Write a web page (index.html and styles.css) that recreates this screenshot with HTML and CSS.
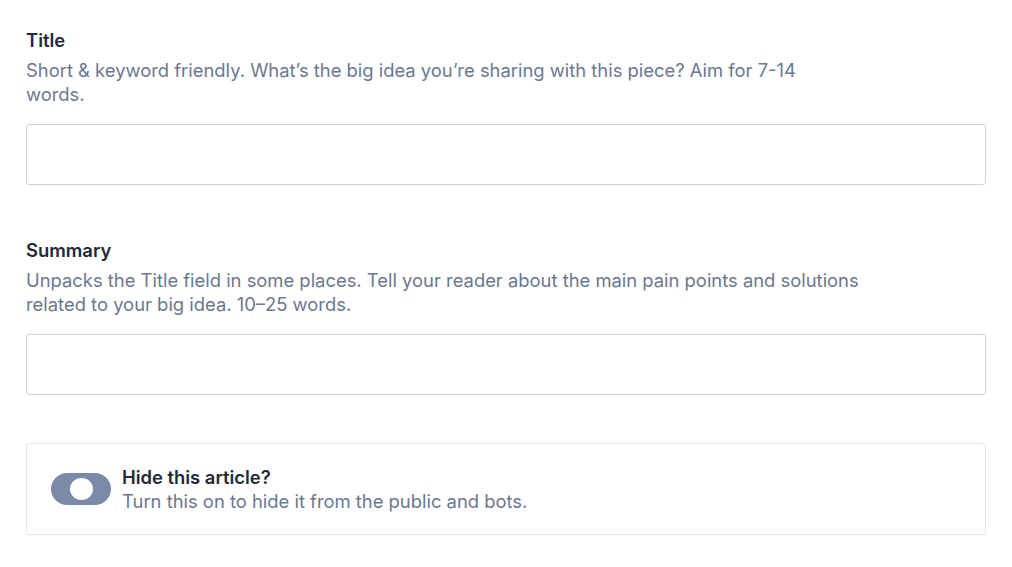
FILE: index.html
```html
<!DOCTYPE html>
<html>
<head>
<meta charset="utf-8">
<link rel="stylesheet" href="styles.css">
</head>
<body>
<div class="form">
  <div class="field">
    <div class="label">Title</div>
    <div class="help help-narrow">Short &amp; keyword friendly. What’s the big idea you’re sharing with this piece? Aim for 7-14 words.</div>
    <input class="input" type="text">
  </div>
  <div class="field">
    <div class="label">Summary</div>
    <div class="help">Unpacks the Title field in some places. Tell your reader about the main pain points and solutions related to your big idea. 10–25 words.</div>
    <input class="input" type="text">
  </div>
  <div class="card">
    <div class="toggle"><span class="knob"></span></div>
    <div class="card-text">
      <div class="card-title">Hide this article?</div>
      <div class="card-help">Turn this on to hide it from the public and bots.</div>
    </div>
  </div>
</div>
</body>
</html>
```

FILE: styles.css
```css
html, body {
  margin: 0;
  padding: 0;
  background: #ffffff;
  font-family: Inter, "Noto Sans", sans-serif;
}
.form {
  padding: 28px 26px 0 26px;
  display: flex;
  flex-direction: column;
}
.field {
  display: flex;
  flex-direction: column;
  margin-bottom: 53px;
}
.field + .field {
  margin-bottom: 48px;
}
.label {
  font-size: 18.4px;
  font-weight: 600;
  line-height: 24px;
  color: #222836;
  margin-bottom: 6px;
}
.help {
  font-size: 18.4px;
  line-height: 24px;
  color: #6b7890;
  max-width: 845px;
  margin-bottom: 18px;
}
.help-narrow {
  max-width: 820px;
}
.input {
  box-sizing: border-box;
  height: 61px;
  width: 100%;
  border: 1px solid #ccd1dc;
  border-radius: 3px;
  margin: 0;
  padding: 0 12px;
  font-size: 18px;
  background: #fff;
}
.card {
  box-sizing: border-box;
  height: 92px;
  border: 1px solid #e2e6ec;
  border-radius: 3px;
  display: flex;
  align-items: center;
  padding: 0 24px;
  gap: 11px;
}
.toggle {
  width: 60px;
  height: 32px;
  border-radius: 16px;
  background: #7a8aa8;
  display: flex;
  align-items: center;
  padding-left: 19px;
  box-sizing: border-box;
  flex-shrink: 0;
}
.knob {
  width: 23px;
  height: 22px;
  border-radius: 50%;
  background: #fff;
}
.card-title {
  font-size: 18.4px;
  font-weight: 600;
  line-height: 24px;
  color: #222836;
}
.card-help {
  font-size: 18.4px;
  line-height: 24px;
  color: #6b7890;
}
```
